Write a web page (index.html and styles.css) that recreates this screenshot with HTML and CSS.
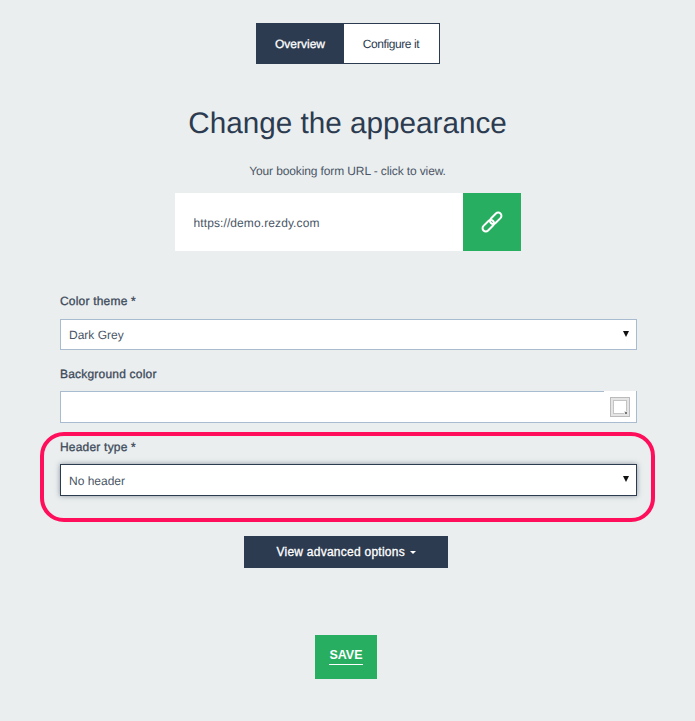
FILE: index.html
```html
<!DOCTYPE html>
<html lang="en">
<head>
<meta charset="UTF-8">
<meta name="viewport" content="width=device-width, initial-scale=1.0">
<title>Change the appearance</title>
<link rel="stylesheet" href="styles.css">
</head>
<body>
<div class="page">
  <div class="tabs">
    <a class="tab tab-active">Overview</a>
    <a class="tab">Configure it</a>
  </div>

  <h1>Change the appearance</h1>
  <p class="hint">Your booking form URL - click to view.</p>

  <div class="url-row">
    <div class="url-text">https://demo.rezdy.com</div>
    <a class="url-btn">
      <svg width="24" height="24" viewBox="0 0 24 24" fill="none" stroke="#fff" stroke-width="2">
        <g transform="rotate(-45 12 12)">
          <rect x="0" y="8.75" width="13.5" height="6.5" rx="3.25"/>
          <rect x="10.5" y="8.75" width="13.5" height="6.5" rx="3.25"/>
        </g>
      </svg>
    </a>
  </div>

  <form class="form">
    <label class="field-label">Color theme *</label>
    <div class="select-box">Dark Grey</div>

    <label class="field-label">Background color</label>
    <div class="color-input">
      <div class="color-addon"><span class="swatch"></span></div>
    </div>

    <!-- highlighted group -->
    <div class="highlight">
      <label class="field-label">Header type *</label>
      <div class="select-box select-focus">No header</div>
    </div>

    <button type="button" class="advanced-btn">View advanced options <span class="caret"></span></button>
    <button type="button" class="save-btn"><span>SAVE</span></button>
  </form>
</div>
</body>
</html>
```

FILE: styles.css
```css
body {
  margin: 0;
  background-color: #eaeeef;
  color: #2c3b4f;
  font-family: "Liberation Sans", Arial, sans-serif;
  font-size: 12px;
  text-rendering: geometricPrecision;
}

.page {
  display: flex;
  flex-direction: column;
  align-items: center;
  padding-top: 23px;
  height: 698px;
}

.tabs {
  display: flex;
  width: 184px;
  height: 41px;
  box-sizing: border-box;
  border: 1px solid #2c3b4f;
  background-color: #fff;
}

.tab {
  display: flex;
  align-items: center;
  justify-content: center;
  flex: 1;
  color: #2c3b4f;
  letter-spacing: -0.4px;
}

.tab-active {
  flex: none;
  width: 87px;
  background-color: #2c3b4f;
  color: #fff;
  letter-spacing: 0;
  -webkit-text-stroke: 0.3px #fff;
}

h1 {
  margin: 42px 0 0;
  font-size: 29.7px;
  line-height: 36px;
  font-weight: normal;
  color: #2c3b4f;
}

.hint {
  margin: 22px 0 0;
  line-height: 14px;
  color: #4a5666;
  letter-spacing: -0.12px;
}

.url-row {
  display: flex;
  width: 346px;
  height: 58px;
  margin-top: 15px;
  background-color: #fff;
}

.url-text {
  flex: 1;
  padding-left: 19px;
  line-height: 60px;
  color: #4a5666;
  letter-spacing: 0.1px;
}

.url-btn {
  display: flex;
  align-items: center;
  justify-content: center;
  width: 58px;
  background-color: #27ae60;
}

.form {
  display: flex;
  flex-direction: column;
  width: 577px;
  margin-top: 42px;
  margin-left: 2px;
}

.field-label {
  display: block;
  height: 14px;
  line-height: 16px;
  margin-bottom: 12px;
  color: #3d4a5a;
  letter-spacing: 0.2px;
  -webkit-text-stroke: 0.3px #3d4a5a;
}

.select-box {
  position: relative;
  height: 31px;
  box-sizing: border-box;
  border: 1px solid #a9bccf;
  background-color: #fff;
  padding-left: 8px;
  line-height: 30px;
  color: #4a5666;
  margin-bottom: 16px;
}

/* native looking arrow */
.select-box::after {
  content: "";
  position: absolute;
  right: 7px;
  top: 11px;
  border-left: 3px solid transparent;
  border-right: 3px solid transparent;
  border-top: 6px solid #111;
}

.select-focus {
  height: 32px;
  border-color: #2c3b4f;
  box-shadow: 0 0 5px rgba(44, 59, 79, 0.5);
  line-height: 33px;
  margin-bottom: 0;
}

.color-input {
  position: relative;
  height: 32px;
  margin-top: -1px;
  box-sizing: border-box;
  border: 1px solid #a9bccf;
  background-color: #fff;
}

.color-addon {
  position: absolute;
  top: -1px;
  right: 0;
  display: flex;
  align-items: center;
  justify-content: center;
  width: 32px;
  height: 31px;
  background-color: #fff;
}

.swatch {
  position: relative;
  width: 12px;
  height: 12px;
  border: 1px solid #c4c4c4;
  background-color: #fff;
  box-shadow: 0 0 0 2px #e4e4e4, 0 0 0 3px #bbb;
}

.swatch::after {
  content: "";
  position: absolute;
  right: -2px;
  bottom: -2px;
  width: 4px;
  height: 4px;
  background-color: #e4e4e4;
  box-shadow: inset 0 0 0 1px #e4e4e4, inset 0 0 0 2px #777;
}

.highlight {
  margin: 9px -18px 0 -20px;
  height: 90px;
  box-sizing: border-box;
  padding: 3px 14px 0 16px;
  border: 4px solid #ff0f5b;
  border-radius: 24px;
}

.highlight .field-label {
  margin-bottom: 11px;
}

.advanced-btn {
  align-self: center;
  width: 204px;
  height: 32px;
  margin: 14px 5px 0 0;
  border: none;
  background-color: #2c3b4f;
  color: #fff;
  font-family: inherit;
  font-size: 12px;
  letter-spacing: 0.25px;
  -webkit-text-stroke: 0.3px #fff;
}

.caret {
  display: inline-block;
  vertical-align: middle;
  margin-left: 1px;
  border-left: 3px solid transparent;
  border-right: 3px solid transparent;
  border-top: 3px solid #fff;
}

.save-btn {
  align-self: center;
  width: 62px;
  height: 44px;
  margin: 67px 5px 0 0;
  padding: 0 0 2px;
  border: none;
  background-color: #27ae60;
  color: #fff;
  font-family: inherit;
  font-size: 12.5px;
  font-weight: bold;
}

.save-btn span {
  display: inline-block;
  padding-bottom: 2px;
  border-bottom: 1px solid #fff;
}
```
